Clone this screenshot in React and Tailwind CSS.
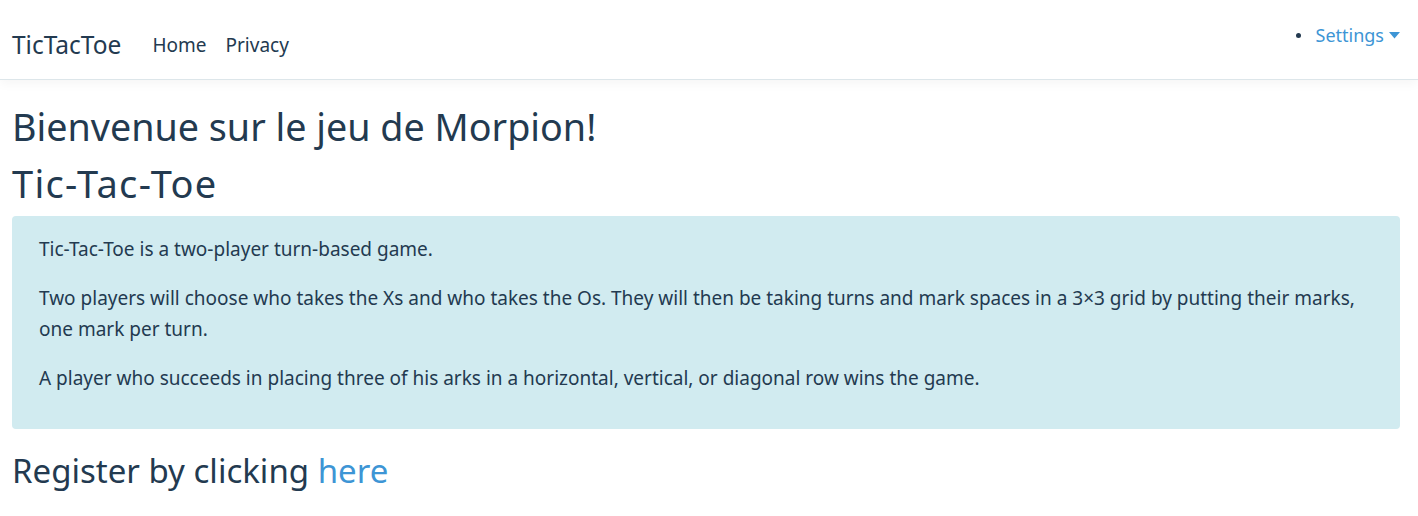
export default function App() {
  const font = { fontFamily: '"Noto Sans", "Open Sans", sans-serif' };
  return (
    <div className="min-h-[516px] bg-white text-[#233a50]" style={font}>
      <header className="h-[80px] border-b border-[#dde6ea] bg-white shadow-[0_4px_10px_rgba(0,0,0,0.04)] flex items-start justify-between">
        <div className="flex items-center h-[79px] pl-[12px] pt-[12px]">
          <span className="text-[24.5px] leading-none mr-[31px]">TicTacToe</span>
          <span className="text-[19px] leading-none mr-[19px]">Home</span>
          <span className="text-[19px] leading-none">Privacy</span>
        </div>
        <div className="flex items-center h-[70px] pr-[18px]">
          <span className="w-[5px] h-[5px] rounded-full bg-[#233a50] mr-[15px]"></span>
          <span className="text-[18px] leading-none text-[#3d95d5]">Settings</span>
          <svg width="11" height="7" viewBox="0 0 11 7" className="ml-[5px]">
            <path d="M0 0 L11 0 L5.5 6.5 Z" fill="#3d95d5" />
          </svg>
        </div>
      </header>
      <main className="pl-[12px] pr-[18px] pt-[30px]">
        <h1 className="text-[37.7px] leading-[57px] -mt-[12px]">Bienvenue sur le jeu de Morpion!</h1>
        <h2 className="text-[38px] leading-[57px] tracking-[1.3px]">Tic-Tac-Toe</h2>
        <div className="mt-[4px] rounded-[4px] bg-[#d1ebf0] px-[27px] pt-[18px] pb-[17px] text-[19px] leading-[31px]">
          <p className="mb-[18px]">Tic-Tac-Toe is a two-player turn-based game.</p>
          <p className="mb-[18px]">Two players will choose who takes the Xs and who takes the Os. They will then be taking turns and mark spaces in a 3×3 grid by putting their marks, one mark per turn.</p>
          <p className="mb-[18px]">A player who succeeds in placing three of his arks in a horizontal, vertical, or diagonal row wins the game.</p>
        </div>
        <h3 className="mt-[19px] text-[33px] leading-[46px]">
          Register by clicking <span className="text-[#3d95d5]">here</span>
        </h3>
      </main>
    </div>
  );
}
